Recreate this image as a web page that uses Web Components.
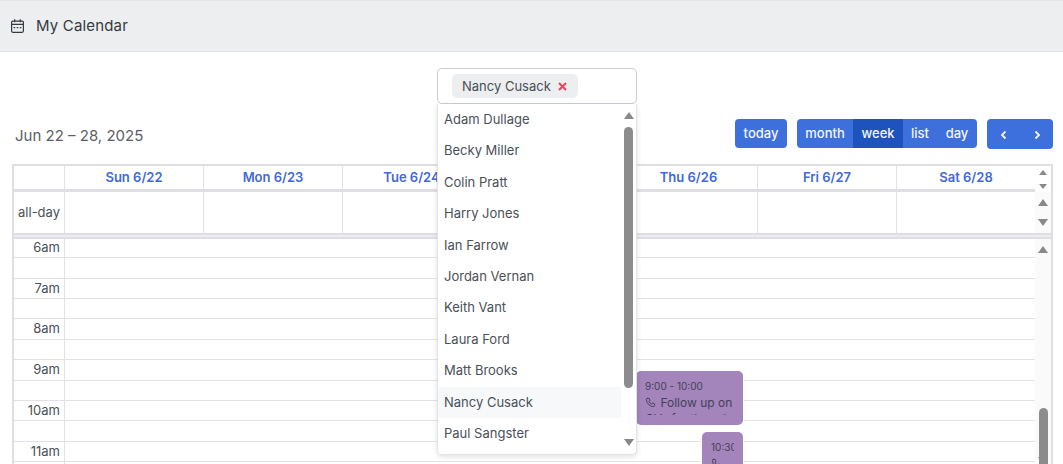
<!DOCTYPE html>
<html lang="en">
<head>
<meta charset="utf-8">
<title>My Calendar</title>
<style>
	html, body {
		margin: 0;
		height: 464px;
		overflow: hidden;
		background: #fff;
		font-family: Inter, "Liberation Sans", sans-serif;
		color: #495057;
	}
</style>
</head>
<body>
<app-header>My Calendar</app-header>
<person-select selected="Nancy Cusack" active="Nancy Cusack"></person-select>
<cal-toolbar title="Jun 22 – 28, 2025"></cal-toolbar>
<week-calendar>
	<cal-event slot="events" style="left:622px;top:132px;width:107px;height:54px" time="9:00 - 10:00" text="Follow up on OVs for the role"></cal-event>
	<cal-event slot="events" style="left:688px;top:193px;width:41px;height:60px" time="10:30" text=""></cal-event>
</week-calendar>

<script>
const PEOPLE = ["Adam Dullage", "Becky Miller", "Colin Pratt", "Harry Jones", "Ian Farrow", "Jordan Vernan", "Keith Vant", "Laura Ford", "Matt Brooks", "Nancy Cusack", "Paul Sangster"];
const DAYS = ["Sun 6/22", "Mon 6/23", "Tue 6/24", "Wed 6/25", "Thu 6/26", "Fri 6/27", "Sat 6/28"];
const HOURS = ["6am", "7am", "8am", "9am", "10am", "11am"];

/**
 * Top bar with the page title.
 */
class AppHeader extends HTMLElement {
	constructor () {
		super();
		this.attachShadow({mode: "open"}).innerHTML = `
			<style>
				:host {
					display: flex;
					align-items: center;
					gap: 12px;
					height: 50px;
					padding-left: 11px;
					background: #eceef0;
					border-top: 1px solid #e2e4e8;
					border-bottom: 1px solid #dee1e5;
					font-size: 15px;
					letter-spacing: .17px;
					color: #343a40;
				}
				span { margin-top: -2px; }
				svg { display: block; }
			</style>
			<svg width="13" height="14" viewBox="0 0 13 14" fill="none" stroke="#343a40" stroke-width="1.2">
				<rect x=".6" y="2.1" width="11.8" height="11.2" rx="1.2"/>
				<path d="M.6 5.4h11.8M3.7 .3v3M9.3 .3v3" />
				<path d="M2.6 8.6h1.6M5.7 8.6h1.6M8.8 8.6h1.6" stroke-width="1.3"/>
			</svg>
			<span><slot></slot></span>
		`;
	}
}

/**
 * Up and down arrows of a scrolling strip.
 */
class ScrollStrip extends HTMLElement {
	constructor () {
		super();
		this.attachShadow({mode: "open"}).innerHTML = `
			<style>
				:host {
					display: flex;
					flex-direction: column;
					align-items: center;
					justify-content: space-between;
					box-sizing: border-box;
					width: 16px;
					background: #fafafa;
					padding: var(--strip-pad, 5px 0);
				}
				i {
					display: block;
					width: 0;
					height: 0;
					border-left: var(--arrow, 5px) solid transparent;
					border-right: var(--arrow, 5px) solid transparent;
				}
				.up { border-bottom: var(--arrow-h, 6px) solid #888; }
				.down { border-top: var(--arrow-h, 6px) solid #888; }
			</style>
			<i class="up"></i>
			<i class="down"></i>
		`;
	}
}

/**
 * Multi select with a chip and its opened list.
 */
class PersonSelect extends HTMLElement {
	constructor () {
		super();
		const selected = this.getAttribute("selected");
		const active = this.getAttribute("active");
		const items = PEOPLE.map(name => `<li class="${name === active ? "active" : ""}">${name}</li>`).join("");
		this.attachShadow({mode: "open"}).innerHTML = `
			<style>
				:host {
					display: block;
					position: relative;
					z-index: 10;
					box-sizing: border-box;
					width: 200px;
					height: 36px;
					margin: 16px 0 0 437px;
					font-size: 13px;
					color: #495057;
				}
				.control {
					box-sizing: border-box;
					height: 36px;
					padding: 5px 14px;
					border: 1px solid #c9ccd1;
					border-radius: 5px;
					background: #fff;
				}
				.chip {
					display: inline-flex;
					align-items: center;
					gap: 7px;
					box-sizing: border-box;
					width: 126px;
					height: 24px;
					padding: 0 10px;
					background: #eceef0;
					border-radius: 5px;
				}
				.chip svg { display: block; }
				.menu {
					position: absolute;
					left: 0;
					top: 36px;
					box-sizing: border-box;
					width: 200px;
					height: 351px;
					background: #fff;
					border: 1px solid #e3e4e8;
					border-top: 0;
					border-radius: 0 0 5px 5px;
					box-shadow: 0 2px 5px rgba(0, 0, 0, .12);
					overflow: hidden;
				}
				ul {
					list-style: none;
					margin: 0;
					padding: 0;
					width: 183px;
				}
				li {
					height: 31.4px;
					line-height: 31.4px;
					padding-left: 6px;
				}
				li.active { background: #f7f8fa; }
				.bar {
					position: absolute;
					right: 3px;
					top: 23px;
					width: 9px;
					height: 261px;
					border-radius: 5px;
					background: #8c8c8c;
				}
				.arrow {
					position: absolute;
					right: 2px;
					width: 0;
					height: 0;
					border-left: 5.5px solid transparent;
					border-right: 5.5px solid transparent;
				}
				.arrow.up { top: 8px; border-bottom: 7px solid #888; }
				.arrow.down { top: 335px; border-top: 7px solid #888; }
			</style>
			<div class="control">
				<span class="chip">${selected}
					<svg width="9" height="9" viewBox="0 0 9 9" stroke="#f04458" stroke-width="2"><path d="M1 1l7 7M8 1L1 8"/></svg>
				</span>
			</div>
			<div class="menu">
				<ul>${items}</ul>
				<span class="arrow up"></span>
				<span class="bar"></span>
				<span class="arrow down"></span>
			</div>
		`;
	}
}

/**
 * Date range on the left, button groups on the right.
 */
class CalToolbar extends HTMLElement {
	constructor () {
		super();
		this.attachShadow({mode: "open"}).innerHTML = `
			<style>
				:host {
					display: flex;
					align-items: flex-start;
					gap: 10px;
					height: 45px;
					margin-top: 15px;
					padding: 0 10px 0 15px;
				}
				h2 {
					flex: 1;
					margin: 8px 0 0;
					font-size: 15px;
					font-weight: 400;
					line-height: 18px;
					color: #5a6068;
				}
				.group {
					display: flex;
					height: 29px;
					border-radius: 4px;
					overflow: hidden;
					background: #3d6fdd;
				}
				button {
					all: unset;
					box-sizing: border-box;
					height: 100%;
					text-align: center;
					font: 500 13px/29px Inter, "Liberation Sans", sans-serif;
					color: #f4f6fc;
				}
				button.on { background: #1e52bd; }
				.nav { height: 30px; }
				.nav button { line-height: 28px; width: 33px; }
				.nav svg { vertical-align: -1px; }
			</style>
			<h2>${this.getAttribute("title")}</h2>
			<div class="group"><button style="width:52px">today</button></div>
			<div class="group">
				<button style="width:56px">month</button>
				<button class="on" style="width:50px">week</button>
				<button style="width:34px">list</button>
				<button style="width:40px">day</button>
			</div>
			<div class="group nav">
				<button><svg width="8" height="10" viewBox="0 0 8 10" fill="none" stroke="#f4f6fc" stroke-width="1.8"><path d="M5.5 1.5L2 5l3.5 3.5"/></svg></button>
				<button><svg width="8" height="10" viewBox="0 0 8 10" fill="none" stroke="#f4f6fc" stroke-width="1.8"><path d="M2.5 1.5L6 5 2.5 8.5"/></svg></button>
			</div>
		`;
		this.removeAttribute("title");
	}
}

/**
 * One timed event block.
 */
class CalEvent extends HTMLElement {
	constructor () {
		super();
		this.attachShadow({mode: "open"}).innerHTML = `
			<style>
				:host {
					display: block;
					position: absolute;
					box-sizing: border-box;
					background: #a384bb;
					border-radius: 5px;
					box-shadow: 0 0 0 1px #fff;
					overflow: hidden;
					color: #45415a;
				}
				.inner {
					margin: 9px 6px 10px 9px;
					height: calc(100% - 19px);
					overflow: hidden;
				}
				.time { font-size: 10px; line-height: 13px; white-space: nowrap; overflow: hidden; margin-right: 3px; }
				.text { font-size: 12px; line-height: 15.5px; margin-top: 2px; }
				svg { vertical-align: -1px; margin-right: 1px; }
			</style>
			<div class="inner">
				<div class="time">${this.getAttribute("time")}</div>
				<div class="text">
					<svg width="11" height="11" viewBox="0 0 24 24" fill="none" stroke="#45415a" stroke-width="2" stroke-linecap="round" stroke-linejoin="round"><path d="M5 3h4l2 5-2.5 1.5a11 11 0 0 0 6 6L16 13l5 2v4a2 2 0 0 1-2 2A16 16 0 0 1 3 5a2 2 0 0 1 2-2z"/></svg>
					${this.getAttribute("text")}
				</div>
			</div>
		`;
	}
}

/**
 * The week view: day headings, all-day row and time grid.
 */
class WeekCalendar extends HTMLElement {
	constructor () {
		super();
		const heads = DAYS.map(day => `<div class="cell head">${day}</div>`).join("");
		const blanks = DAYS.map(() => `<div class="cell"></div>`).join("");
		let slots = "";
		HOURS.forEach(hour => {
			slots += `<div class="slot"><span class="label">${hour}</span><span class="lane"></span></div>`;
			slots += `<div class="slot"><span class="label"></span><span class="lane"></span></div>`;
		});
		this.attachShadow({mode: "open"}).innerHTML = `
			<style>
				:host {
					display: block;
					box-sizing: border-box;
					width: 1041px;
					margin-left: 12px;
					border: solid #dfdfe3;
					border-width: 2px 2px 0;
					font-size: 13px;
					color: #495057;
				}
				.row { display: flex; }
				.cells {
					flex: none;
					width: 1021px;
					display: grid;
					grid-template-columns: 51px 139px 139px 138px 139px 138px 139px 138px;
				}
				.cell { border-right: 1px solid #e2e2e6; box-sizing: border-box; }
				.cell:nth-child(8) { border-right: 0; }
				.heads .cells { height: 26px; border-bottom: 3px solid #dfdfe3; box-sizing: border-box; }
				.head {
					font-weight: 600;
					line-height: 23px;
					text-align: center;
					color: #4169d8;
				}
				.heads scroll-strip { height: 26px; --arrow: 4px; --arrow-h: 5px; --strip-pad: 4px 0 3px; background: #fff; }
				.allday { border-bottom: 2px solid #dfdfe3; }
				.allday .cells { height: 41px; }
				.allday .label { line-height: 41px; text-align: right; padding-right: 4px; }
				.allday scroll-strip { height: 41px; --strip-pad: 7px 0 7px; --arrow: 5.5px; --arrow-h: 7px; }
				.rule { height: 4px; background: #ecedf0; border-bottom: 2px solid #dfdfe3; box-sizing: border-box; }
				.grid { position: relative; height: 225px; overflow: hidden; }
				.slots { width: 1021px; margin-top: -1.1px; }
				.slot {
					display: grid;
					grid-template-columns: 51px 1fr;
					height: 20.38px;
				}
				.slot .label {
					box-sizing: border-box;
					border-right: 1px solid #e2e2e6;
					border-bottom: 1px solid #e2e2e6;
					padding-right: 4px;
					line-height: 19px;
					text-align: right;
					white-space: nowrap;
				}
				.slot .lane { border-bottom: 1px solid #e2e2e6; }
				.grid scroll-strip {
					position: absolute;
					right: 0;
					top: 0;
					height: 100%;
					--strip-pad: 7px 0 0;
					--arrow: 5.5px;
					--arrow-h: 7px;
				}
				.thumb {
					position: absolute;
					right: 3px;
					top: 169px;
					width: 9px;
					height: 80px;
					background: #8c8c8c;
					border-radius: 5px 5px 0 0;
				}
			</style>
			<div class="row heads">
				<div class="cells"><div class="cell"></div>${heads}</div>
				<scroll-strip></scroll-strip>
			</div>
			<div class="row allday">
				<div class="cells"><div class="cell label">all-day</div>${blanks}</div>
				<scroll-strip></scroll-strip>
			</div>
			<div class="rule"></div>
			<div class="grid">
				<div class="slots">${slots}</div>
				<slot name="events"></slot>
				<scroll-strip></scroll-strip>
				<div class="thumb"></div>
			</div>
		`;
	}
}

window.customElements.define("app-header", AppHeader);
window.customElements.define("scroll-strip", ScrollStrip);
window.customElements.define("person-select", PersonSelect);
window.customElements.define("cal-toolbar", CalToolbar);
window.customElements.define("cal-event", CalEvent);
window.customElements.define("week-calendar", WeekCalendar);
</script>
</body>
</html>
